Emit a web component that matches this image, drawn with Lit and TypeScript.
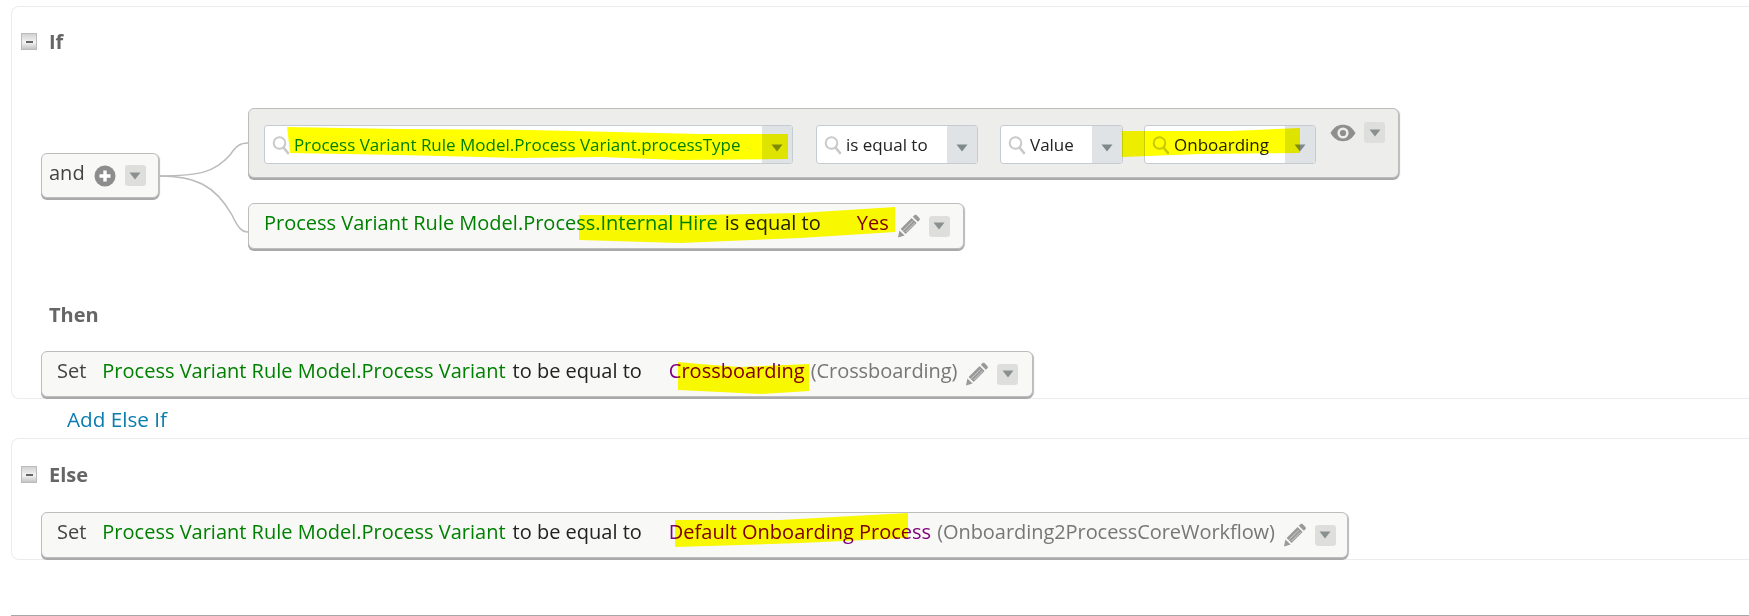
import { LitElement, html, css, svg } from "lit";
import { customElement } from "lit/decorators.js";

const searchIcon = html`<svg class="search" viewBox="0 0 18 20" width="18" height="20"><circle cx="7.5" cy="8" r="5.8" fill="none" stroke="#c9c9c9" stroke-width="2"/><path d="M11.5 12.5 L16 18" stroke="#c9c9c9" stroke-width="2.6" stroke-linecap="round"/></svg>`;
const menuBtn = html`<span class="menu"><svg viewBox="0 0 12 8" width="12" height="8"><path d="M0.5 0.5 H11.5 L6 7.5 Z" fill="#8a8f8f"/></svg></span>`;
const pencil = html`<svg class="pencil" viewBox="0 0 25 25" width="25" height="25"><g fill="#999"><path d="M2 23.5 L3.4 16.4 L8.6 21.6 Z"/><path d="M4.6 15 L15.6 4 L20.6 9 L9.6 20 Z"/><path d="M16.8 2.8 L18.4 1.2 C19.1 .6 20 .6 20.7 1.2 L23.4 3.9 C24 4.6 24 5.5 23.4 6.2 L21.8 7.8 Z"/></g><path d="M7 16.8 L16.6 7.2 M9.6 18 L18.6 9" stroke="#ddd" stroke-width=".8"/></svg>`;
const plus = html`<svg class="plus" viewBox="0 0 22 22" width="22" height="22"><circle cx="11" cy="11" r="10.5" fill="#8d8d8d"/><path d="M11 5.5 V16.5 M5.5 11 H16.5" stroke="#fff" stroke-width="3.4"/></svg>`;
const eye = html`<svg class="eye" viewBox="0 0 26 18" width="26" height="18"><path fill-rule="evenodd" fill="#8f8f8f" d="M0.5 9 C4 3 8 .8 13 .8 S22 3 25.5 9 C22 15 18 17.2 13 17.2 S4 15 .5 9 Z M13 3.4 A5.6 5.6 0 1 0 13 14.6 A5.6 5.6 0 1 0 13 3.4 Z"/><circle cx="13" cy="9" r="3.1" fill="#8f8f8f"/></svg>`;
const toggle = html`<span class="toggle"><span class="dash"></span></span>`;

const field = (cls: string, textCls: string, text: string) => html`
  <div class="field ${cls}">
    ${searchIcon}
    <span class="ftext ${textCls}">${text}</span>
    <span class="seg"><svg viewBox="0 0 12 8" width="12" height="8"><path d="M0.5 0.5 H11.5 L6 7.5 Z" fill="#7e8a8a"/></svg></span>
  </div>`;

const HIGHLIGHTS = [
  "287,127 400,129 530,130 700,134 788,134 788,159 680,160 600,157 520,158 400,155 290,153",
  "1122,131 1230,131 1300,128 1300,153 1200,154 1122,157",
  "579,215 700,215 800,213 895,207 895,232 800,238 680,243 579,240",
  "678,362 700,364 740,367 809,364 809,391 760,394 720,392 678,390",
  "675,520 780,520 908,513 908,538 800,543 675,547",
];

@customElement("app-root")
export class AppRoot extends LitElement {
  static styles = css`
    :host {
      display: block;
      position: relative;
      width: 1749px;
      height: 616px;
      overflow: hidden;
      background: #fff;
      font-family: "Open Sans", "Noto Sans", sans-serif;
      font-size: 20px;
      color: #222;
      box-sizing: border-box;
      padding-top: 6px;
    }
    * { box-sizing: border-box; }
    .panel {
      margin-left: 11px;
      border: 1px solid #ececec;
      border-right: none;
      border-radius: 8px 0 0 8px;
      padding-left: 9px;
    }
    .if { height: 393px; padding-top: 26px; }
    .else { height: 122px; padding-top: 27px; }
    .head { display: flex; align-items: center; height: 17px; gap: 12px; }
    .toggle {
      width: 16px; height: 17px;
      display: flex; align-items: center; justify-content: center;
      border: 1px solid #bbb;
      background: linear-gradient(#d2d2d2, #f4f4f4 55%, #c4c4c4);
    }
    .dash { width: 7px; height: 2px; background: #666; }
    .title { font-weight: 700; color: #666; font-size: 20px; line-height: 24px; }
    .tree { display: flex; align-items: flex-start; margin: 58px 0 0 20px; }
    .andbox {
      width: 118px; height: 45px; margin-top: 45px;
      display: flex; align-items: center;
      padding-left: 7px;
    }
    .box {
      background: #f8f8f7;
      border: 1px solid #bdbdbd;
      border-radius: 6px;
      box-shadow: 0 2px 0 #a9a9a9, 1px 1px 1px #bbb;
    }
    .and { color: #444; margin-right: 9px; margin-top: -6px; }
    .plus { margin-right: 9px; flex: none; }
    .menu {
      width: 21px; height: 21px; flex: none;
      display: inline-flex; align-items: center; justify-content: center;
      background: #dededd; border-radius: 3px;
    }
    .conn { width: 89px; height: 141px; flex: none; }
    .rules { display: flex; flex-direction: column; gap: 25px; }
    .group {
      width: 1151px; height: 70px;
      background: #ededeb;
      display: flex; align-items: flex-start;
      padding: 16px 0 0 15px;
    }
    .field {
      height: 39px;
      display: flex; align-items: center;
      background: #fff;
      border: 1px solid #c5ccd1;
      border-radius: 3px;
      padding-left: 7px;
      flex: none;
      overflow: hidden;
    }
    .search { flex: none; margin-right: 4px; }
    .ftext { flex: 1; white-space: nowrap; font-size: 17px; margin-top: -1px; }
    .seg {
      width: 30px; height: 100%; flex: none;
      background: #dfe3e6;
      display: flex; align-items: center; justify-content: center;
      padding-top: 6px;
    }
    .f1 { width: 529px; margin-right: 23px; }
    .f2 { width: 162px; margin-right: 22px; }
    .f3 { width: 123px; margin-right: 21px; }
    .f4 { width: 172px; margin-right: 14px; }
    .eye { flex: none; margin-top: -1px; margin-right: 8px; }
    .group .menu { margin-top: -3px; }
    .line {
      height: 46px;
      display: flex; align-items: center;
      white-space: nowrap;
      padding-left: 15px;
    }
    .rule2 { width: 716px; }
    .set { margin-left: 20px; }
    .set1 { width: 992px; }
    .set2 { width: 1307px; }
    .line > span.t { margin-top: -8px; }
    .g { color: #008000; }
    .k { color: #222; }
    .m { color: #800080; }
    .y { color: #800080; }
    .n { color: #777; letter-spacing: -0.06px; }
    .s { color: #444; }
    .pencil { flex: none; margin-left: 7px; }
    .line .menu { margin-left: 8px; }
    .then { margin: 54px 0 24px 28px; height: 24px; }
    .else .title { line-height: 17px; }
    .else .set { margin-top: 29px; }
    .add {
      margin: 8px 0 7px 67px;
      height: 24px; line-height: 24px;
      color: #0a7cad;
      font-size: 20.7px;
    }
    .rule {
      margin-top: 55px; margin-left: 11px;
      height: 1px; background: #a8a8a8;
    }
    .marks {
      position: absolute; left: 0; top: 0;
      width: 1749px; height: 616px;
      mix-blend-mode: multiply;
      pointer-events: none;
    }
    .ml7 { margin-left: 7px; }
    .ml6 { margin-left: 6px; }
    .ml16 { margin-left: 16px; }
    .ml27 { margin-left: 27px; }
    .ml36 { margin-left: 36px; }
  `;

  setLine(cls: string, value: string, tail: string) {
    return html`<div class="box line set ${cls}">
      <span class="t s">Set</span>
      <span class="t g ml16">Process Variant Rule Model.Process Variant</span>
      <span class="t k ml7">to be equal to</span>
      <span class="t m ml27">${value}</span>
      <span class="t n ml6">${tail}</span>
      ${pencil}${menuBtn}
    </div>`;
  }

  render() {
    return html`
      <div class="panel if">
        <div class="head">${toggle}<span class="title">If</span></div>
        <div class="tree">
          <div class="box andbox"><span class="and">and</span>${plus}${menuBtn}</div>
          <svg class="conn" viewBox="0 0 89 141" fill="none" stroke="#bbb" stroke-width="1.5">
            <path d="M0 68 C41 68 56 64 71 47 C77 38 81 35 89 35"/>
            <path d="M0 68 C36 68 56 77 73 107 C79 120 83 124 89 124"/>
          </svg>
          <div class="rules">
            <div class="box group">
              ${field("f1", "g", "Process Variant Rule Model.Process Variant.processType")}
              ${field("f2", "k", "is equal to")}
              ${field("f3", "k", "Value")}
              ${field("f4", "k", "Onboarding")}
              ${eye}${menuBtn}
            </div>
            <div class="box line rule2">
              <span class="t g">Process Variant Rule Model.Process.Internal Hire</span>
              <span class="t k ml7">is equal to</span>
              <span class="t y ml36">Yes</span>
              ${pencil}${menuBtn}
            </div>
          </div>
        </div>
        <div class="title then">Then</div>
        ${this.setLine("set1", "Crossboarding", "(Crossboarding)")}
      </div>
      <div class="add">Add Else If</div>
      <div class="panel else">
        <div class="head">${toggle}<span class="title">Else</span></div>
        ${this.setLine("set2", "Default Onboarding Process", "(Onboarding2ProcessCoreWorkflow)")}
      </div>
      <div class="rule"></div>
      <svg class="marks" viewBox="0 0 1749 616">
        ${HIGHLIGHTS.map((p) => svg`<polygon points=${p} fill="#ffff00"/>`)}
      </svg>
    `;
  }
}
